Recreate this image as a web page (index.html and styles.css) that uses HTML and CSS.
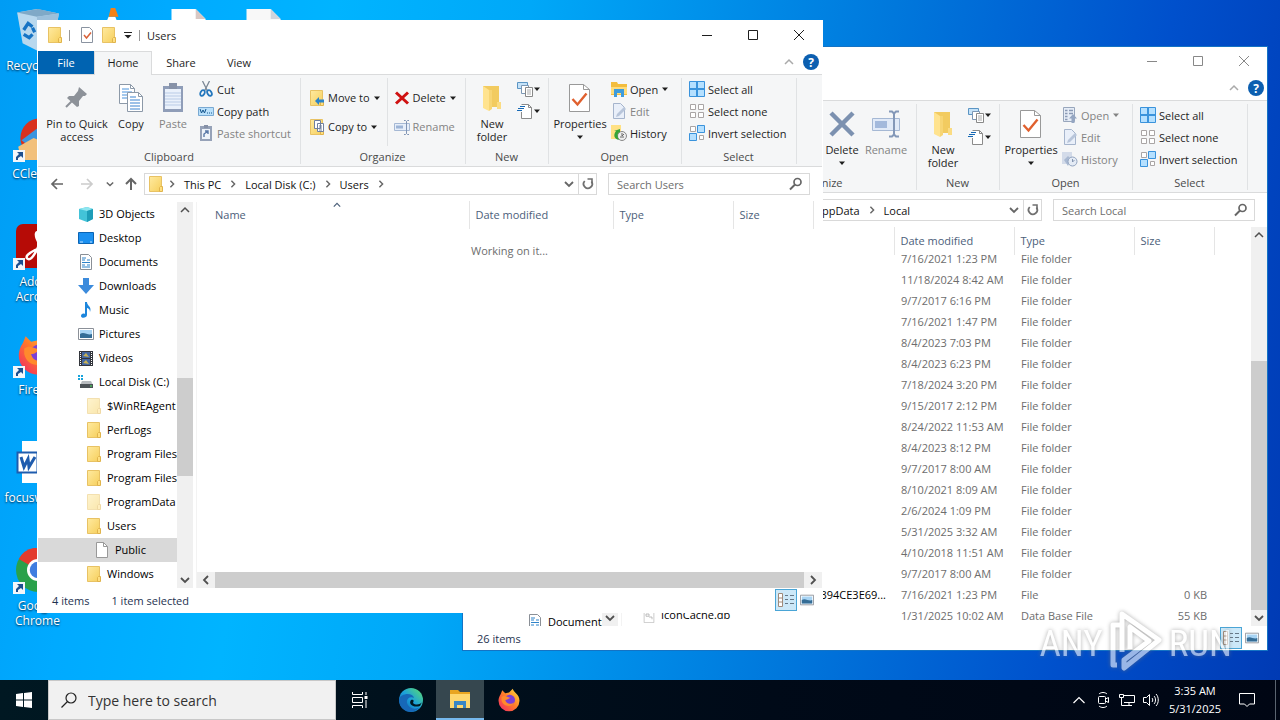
FILE: index.html
```html
<!DOCTYPE html>
<html lang="en">
<head>
  <meta charset="UTF-8">
  <title>Desktop</title>
  <link rel="stylesheet" href="styles.css">
</head>
<body>

<!-- shared icons -->
<svg class="defs" aria-hidden="true">
  <defs>
    <linearGradient id="gold" x1="0" y1="0" x2="1" y2="1"><stop offset="0" stop-color="#ffeaa0"/><stop offset="1" stop-color="#f6cf5c"/></linearGradient>
    <linearGradient id="flame" x1="1" y1="0" x2="0" y2="1"><stop offset="0" stop-color="#ffe23a"/><stop offset=".5" stop-color="#ff7a2a"/><stop offset="1" stop-color="#f0226a"/></linearGradient>
    <linearGradient id="edge" x1="0" y1="1" x2="1" y2="0"><stop offset="0" stop-color="#0c59a4"/><stop offset=".5" stop-color="#1ba0dc"/><stop offset="1" stop-color="#5fe06a"/></linearGradient>
    <symbol id="folder" viewBox="0 0 16 16"><path d="M1.500.5h12v15h-12z" fill="url(#gold)" stroke="#e8c264"/><path d="M12.500 10.500h2v5h-3v-4z" fill="#ffdf80" stroke="#e0b44c"/></symbol>
    <symbol id="bigfolder" viewBox="0 0 32 32"><path d="M7 4h16v21H7z" fill="#f2cb60"/><path d="M7 4l6 4v21l-6-3z" fill="#ffe38f"/><path d="M21 20h4v7h-4z" fill="#fbdc83"/><path d="M13 8h3v19l-3 2z" fill="#f7d574"/></symbol>
    <symbol id="check" viewBox="0 0 16 16"><path d="M2.500.5h8l3 3v12h-11z" fill="#fff" stroke="#8a93a0"/><path d="M5 8l2.500 3L12 5.500" fill="none" stroke="#d8623a" stroke-width="1.500"/></symbol>
    <symbol id="prop" viewBox="0 0 32 32"><path d="M5.500 2.500h14l6 5v22h-20z" fill="#fff" stroke="#999"/><path d="M19.500 2.500v5h6" fill="none" stroke="#999"/><path d="M8.500 17l5 5.500 9-11" fill="none" stroke="#e0602e" stroke-width="2.400"/></symbol>
    <symbol id="pin" viewBox="0 0 32 32"><path d="M18 5l8 7-2 2-2 0-4 5 0 5-2 1-10-9 2-2 5 0 4-5z" fill="#8d9299"/><path d="M12 18l-7 7" stroke="#8d9299" stroke-width="2"/></symbol>
    <symbol id="copy" viewBox="0 0 32 32"><path d="M4.500 2.500h11l4 4v15h-15z" fill="#fff" stroke="#8c99a8"/><path d="M15.500 2.500v4h4" fill="none" stroke="#8c99a8"/><path d="M7 7h7M7 10h10M7 13h10M7 16h10" stroke="#4b93dc"/><path d="M12.500 10.500h11l4 4v15h-15z" fill="#fff" stroke="#8c99a8"/><path d="M23.500 10.500v4h4" fill="none" stroke="#8c99a8"/><path d="M15 15h6M15 18h10M15 21h10M15 24h10M15 27h10" stroke="#3b83d0"/></symbol>
    <symbol id="paste" viewBox="0 0 32 32"><path d="M6 4h20v26H6z" fill="#8f9db8"/><path d="M8 7h16v20H8z" fill="#eaf1fb"/><path d="M12 1h8v6h-8z" fill="#8792a8"/><path d="M8 11h16M8 14h16M8 17h16M8 20h16M8 23h16" stroke="#b9cbe6"/></symbol>
    <symbol id="cut" viewBox="0 0 16 16"><path d="M4.500 0l5 10M11.500 0l-5 10" stroke="#7b8794" stroke-width="1.300"/><ellipse cx="4.500" cy="12" rx="2" ry="3" fill="none" stroke="#2477bd" stroke-width="1.800" transform="rotate(30 4.500 12)"/><ellipse cx="11.500" cy="12" rx="2" ry="3" fill="none" stroke="#2477bd" stroke-width="1.800" transform="rotate(-30 11.500 12)"/></symbol>
    <symbol id="path" viewBox="0 0 16 16"><path d="M.5 4.500h15v8H.5z" fill="#b9e0fb" stroke="#79a9d2"/><path d="M2 6l1.500 4L5 7l1.500 3L8 6M9 10h1M11 10h1M13 10h1" fill="none" stroke="#14548c"/></symbol>
    <symbol id="shortcut" viewBox="0 0 16 16"><path d="M2 1h12v15H2z" fill="#96a2b8"/><path d="M4 4h8v10H4z" fill="#eef3fa"/><path d="M6 0h4v3H6z" fill="#8590a6"/><path d="M6 12V9l4-3M7 6h3v3" fill="none" stroke="#5a79a8" stroke-width="1.400"/></symbol>
    <symbol id="moveto" viewBox="0 0 16 16"><use href="#folder"/><path d="M6 11l4-4v2.500h5v3h-5V15z" fill="#2c84c8"/></symbol>
    <symbol id="copyto" viewBox="0 0 16 16"><use href="#folder"/><path d="M5.500 1.500h6v8h-6zM8.500 4.500h6v8h-6z" fill="#fff" stroke="#7080a0"/><path d="M10 7h3M10 9h3M10 11h3" stroke="#7080a0"/></symbol>
    <symbol id="del" viewBox="0 0 16 16"><path d="M2 2.500l12 11M14 2.500L2 13.500" stroke="#cf1111" stroke-width="3"/></symbol>
    <symbol id="bigdel" viewBox="0 0 32 32"><path d="M5 5l22 22M27 5L5 27" stroke="#7c91b0" stroke-width="4.500"/></symbol>
    <symbol id="rename" viewBox="0 0 16 16"><path d="M.5 4.500h15v7H.5z" fill="#e6eefa" stroke="#a5b8d4"/><path d="M2 6.500h7v3H2z" fill="#9db4d6"/><path d="M10 1.500h1.500l1 1 1-1H15M12.500 2.500v12M10 15.500h1.500l1-1 1 1H15" fill="none" stroke="#8094b4"/></symbol>
    <symbol id="bigrename" viewBox="0 0 32 32"><path d="M2.500 10.500h27v12h-27z" fill="#e1eaf8" stroke="#a5b8d4"/><path d="M5 13h12v7H5z" fill="#a3b9dc"/><path d="M19 3.500h3l2 2 2-2h3M24 5v22M19 28.500h3l2-2 2 2h3" fill="none" stroke="#8498b8" stroke-width="2"/></symbol>
    <symbol id="newitem" viewBox="0 0 16 16"><path d="M.5 1.500h10v6H.5z" fill="#c5e2f8" stroke="#5b95c4"/><path d="M4.500 4.500h7v8h-7z" fill="#fff" stroke="#7b97b4"/><path d="M8.500 6.500h7v9h-7z" fill="#fff" stroke="#888"/><path d="M10 9h4M10 11h4M10 13h4" stroke="#aaa"/></symbol>
    <symbol id="easy" viewBox="0 0 16 16"><path d="M4.500 1.500h7l3 3v11h-10" fill="#fff" stroke="#8b8b8b"/><path d="M4.500 9v6.500M11.500 1.500v3h3" fill="none" stroke="#8b8b8b"/><path d="M3 3.500h5M1 5.500h6M0 7.500h5" stroke="#1769b5"/></symbol>
    <symbol id="open" viewBox="0 0 16 16"><path d="M0 1h6l1 2h9v11H0z" fill="#f3bd3d"/><path d="M0 6h16v7H0z" fill="#ffdc7c"/><path d="M3 16V8h10v8h-3v-4H6v4z" fill="#3d9bdc"/></symbol>
    <symbol id="openoff" viewBox="0 0 16 16"><path d="M1.500.5h11v14h-11z" fill="#e6edf7" stroke="#98a6bc"/><path d="M7 3.500h4M7 6.500h4M3 3.500h2.500M3 6.500h2.500M3 9.500h2.500M3 12.500h2.500" stroke="#8b9ab5" stroke-width="1.600"/><path d="M11 7l4 4.500h-2.500V16h-3v-4.500H7z" fill="#95a6c2"/></symbol>
    <symbol id="edit" viewBox="0 0 16 16"><path d="M2.500.5h7l4 4v11h-11z" fill="#e9eff9" stroke="#a5b4cc"/><path d="M5 14l1-3 7-7 2 2-7 7z" fill="#b8c5da"/></symbol>
    <symbol id="history" viewBox="0 0 16 16"><path d="M0 0h10v14H0z" fill="#ffe184"/><circle cx="11" cy="11" r="4.500" fill="#eee" stroke="#888"/><path d="M11 8v3l2-2M9 12h4" fill="none" stroke="#666"/><path d="M9 4v3c-3 1-3 4-1 8-5-1-6-5-3-9L3 6z" fill="#36a438"/></symbol>
    <symbol id="historyoff" viewBox="0 0 16 16"><path d="M0 1h10v12H0z" fill="#d3dbe9"/><path d="M2 9l4-4 3 3-3 7z" fill="#a9b9d2"/><circle cx="10.500" cy="10.500" r="4.500" fill="#e4ebf5" stroke="#91a3bf"/><path d="M10.500 8v3l2-2" fill="none" stroke="#8495b0"/></symbol>
    <symbol id="selall" viewBox="0 0 16 16"><path d="M.5.5h15v15H.5z" fill="#b5e0ff" stroke="#3a93dc"/><path d="M8 0v16M0 8h16" stroke="#3a93dc" stroke-width="2"/></symbol>
    <symbol id="selnone" viewBox="0 0 16 16"><path d="M1.500 1.500h5v5h-5zM9.500 1.500h5v5h-5zM1.500 9.500h5v5h-5zM9.500 9.500h5v5h-5z" fill="#fff" stroke="#a9a5a5"/></symbol>
    <symbol id="selinv" viewBox="0 0 16 16"><path d="M1.500 1.500h5v5h-5zM10.500 10.500h4v4h-4z" fill="#fff" stroke="#a9a5a5"/><path d="M8.500.5h7v7h-7zM.5 8.500h7v7h-7z" fill="#b5e0ff" stroke="#3a93dc"/></symbol>
    <symbol id="down" viewBox="0 0 8 8"><path d="M1 2.500h6L4 6z" fill="currentColor"/></symbol>
    <symbol id="chev" viewBox="0 0 10 10"><path d="M1 3l4 4 4-4" fill="none" stroke="currentColor" stroke-width="1.800"/></symbol>
    <symbol id="chevup" viewBox="0 0 10 10"><path d="M1 7l4-4 4 4" fill="none" stroke="currentColor" stroke-width="1.500"/></symbol>
    <symbol id="chevr" viewBox="0 0 10 10"><path d="M3 1l4 4-4 4" fill="none" stroke="currentColor" stroke-width="1.800"/></symbol>
    <symbol id="chevl" viewBox="0 0 10 10"><path d="M7 1L3 5l4 4" fill="none" stroke="currentColor" stroke-width="1.800"/></symbol>
    <symbol id="back" viewBox="0 0 16 16"><path d="M14 8H3M8 3L3 8l5 5" fill="none" stroke="currentColor" stroke-width="1.700"/></symbol>
    <symbol id="fwd" viewBox="0 0 16 16"><path d="M2 8h11M8 3l5 5-5 5" fill="none" stroke="currentColor" stroke-width="1.700"/></symbol>
    <symbol id="up" viewBox="0 0 16 16"><path d="M8 14V3M3 8l5-5 5 5" fill="none" stroke="currentColor" stroke-width="2"/></symbol>
    <symbol id="refresh" viewBox="0 0 16 16"><path d="M4.700 5A4.300 4.300 0 1 0 11.500 5.500" fill="none" stroke="#707070" stroke-width="1.800"/><path d="M7.500 3H12v4.500" fill="none" stroke="#707070" stroke-width="1.600"/></symbol>
    <symbol id="find" viewBox="0 0 16 16"><circle cx="9.500" cy="6" r="3.500" fill="none" stroke="currentColor" stroke-width="1.700"/><path d="M7 8.500L2 13.500" stroke="currentColor" stroke-width="2"/></symbol>
    <symbol id="min" viewBox="0 0 12 12"><path d="M1 6.500h10" stroke="currentColor"/></symbol>
    <symbol id="max" viewBox="0 0 12 12"><path d="M1.500 1.500h9v9h-9z" fill="none" stroke="currentColor"/></symbol>
    <symbol id="close" viewBox="0 0 12 12"><path d="M1 1l10 10M11 1L1 11" stroke="currentColor"/></symbol>
    <symbol id="documents" viewBox="0 0 16 16"><path d="M2.500.5h8l3 3v12h-11z" fill="#fff" stroke="#8a8f96"/><path d="M4 4h4M9 6h3M4 6h3M4 8.500h8M4 11h3M9 11h3M4 13h8" stroke="#2f83c9"/></symbol>
    <symbol id="blank" viewBox="0 0 16 16"><path d="M2.500.5h7l4 4v11h-11z" fill="#fff" stroke="#999"/><path d="M9.500.5v4h4" fill="none" stroke="#999"/></symbol>
    <symbol id="dbfile" viewBox="0 0 16 16"><path d="M1.500.5h11l2 2v13h-13z" fill="#fff" stroke="#bbb"/><path d="M4 4h4v3H4zM8 8h4v3" fill="none" stroke="#aaa"/></symbol>
    <symbol id="details" viewBox="0 0 16 16"><path d="M.5 1.500h4v13h-4z" fill="#fff" stroke="#a08a7a"/><path d="M.5 6h4M.5 10h4" stroke="#a08a7a"/><path d="M7 3.500h3M12 3.500h4M7 7.500h3M12 7.500h4M7 11.500h3M12 11.500h4" stroke="#667888"/></symbol>
    <symbol id="pictures" viewBox="0 0 16 16"><path d="M.5 2.500h15v11H.5z" fill="#fff" stroke="#8b9098"/><path d="M2 4h12v8H2z" fill="#a8d4f4"/><path d="M2 8c4-3 8 2 12 0v4H2z" fill="#356d96"/></symbol>
    <symbol id="linkbadge" viewBox="0 0 12 12"><path d="M0 0h12v12H0z" fill="#f2f6fa"/><path d="M3 10V7l3-3-2-2h6v6L8 6 5 8v2z" fill="#1d4f8f"/></symbol>
    <symbol id="firefox" viewBox="0 0 32 32"><path d="M5 8l2-5 4 4 5-1 5-5c1 5 9 7 9 16a14 14 0 0 1-28 0c0-3 1-6 3-9z" fill="url(#flame)"/><circle cx="17" cy="16" r="7" fill="#7b3fd6"/><path d="M6 12c4-3 7 0 12 1-3 1-4 3-7 3 1 5 7 7 12 3-2 7-15 7-17-3z" fill="#ff8a2c"/></symbol>
  </defs>
</svg>

<main class="desktop">
  <ul class="shortcuts">
    <li>
      <svg class="pic" viewBox="0 0 40 40"><path d="M1 4l18-3 20 4-5 29-14 5-14-7z" fill="#b8d8ee"/><path d="M1 4l18 4 20-3-19-4z" fill="#7fa9c7"/><path d="M19 8l20-3-5 29-14 5z" fill="#9cc0db"/><path d="M7 20l4-6 4 3M7 24l5 3 3-3M15 18l2 4" fill="none" stroke="#1673c4" stroke-width="3"/></svg>
      <span>Recycle Bin</span>
    </li>
    <li>
      <svg class="pic" viewBox="0 0 40 40"><path d="M5 27L2 38h36l-3-11z" fill="#f07c10"/><path d="M5 34h28L22 8h-6z" fill="#fff"/><path d="M16 8l2-8h4l3 8z" fill="#f58216"/></svg>
    </li>
    <li>
      <svg class="pic" viewBox="0 0 40 40"><path d="M5 1h22l9 9v29H5z" fill="#fff"/><path d="M27 1l9 9h-9z" fill="#d8c8c4"/></svg>
    </li>
    <li>
      <svg class="pic" viewBox="0 0 40 40"><path d="M5 1h22l9 9v29H5z" fill="#f8f8f8"/><path d="M27 1l9 9h-9z" fill="#d0d4dc"/></svg>
    </li>
    <li>
      <svg class="pic" viewBox="0 0 40 40"><circle cx="22" cy="20" r="18" fill="#d8311f"/><path d="M5 22l16-12 16 14-14 12z" fill="#3a95e0"/><path d="M2 28l14-8 20 8-3 12H5z" fill="#f2c07c"/></svg>
      <svg class="link"><use href="#linkbadge"/></svg>
      <span>CCleaner</span>
    </li>
    <li>
      <svg class="pic" viewBox="0 0 44 44"><rect width="44" height="44" rx="7" fill="#b60b06"/><path d="M22 8c-5 0 0 12 5 17s10 5 10 1-12-3-18 0-11 7-7 9 12-13 12-20-1-7-2-7z" fill="none" stroke="#fff" stroke-width="2.500"/></svg>
      <svg class="link"><use href="#linkbadge"/></svg>
      <span>Adobe Acrobat</span>
    </li>
    <li>
      <svg class="pic"><use href="#firefox"/></svg>
      <svg class="link"><use href="#linkbadge"/></svg>
      <span>Firefox</span>
    </li>
    <li>
      <svg class="pic" viewBox="0 0 44 44"><path d="M6 1h32v42H6z" fill="#fff"/><rect x="1.500" y="12.500" width="20" height="20" fill="#fff" stroke="#1f5cae" stroke-width="2"/><path d="M5 17l3 10 4-8 1 8 6-10" fill="none" stroke="#1f5cae" stroke-width="3"/></svg>
      <span>focuswin.rtf</span>
    </li>
    <li>
      <svg class="pic" viewBox="0 0 48 48"><circle cx="24" cy="24" r="24" fill="#2aa14b"/><path d="M24 24L3 12a24 24 0 0 1 42 0z" fill="#e33b2e"/><path d="M24 24L45 12a24 24 0 0 1-21 36z" fill="#fbc116"/><circle cx="24" cy="24" r="12" fill="#fff"/><circle cx="24" cy="24" r="9" fill="#3f7de0"/></svg>
      <svg class="link"><use href="#linkbadge"/></svg>
      <span>Google Chrome</span>
    </li>
  </ul>

  <!-- background window -->
  <section class="window local">
    <header class="titlebar">
      <div class="controls">
        <button aria-label="Minimize"><svg><use href="#min"/></svg></button>
        <button aria-label="Maximize"><svg><use href="#max"/></svg></button>
        <button aria-label="Close"><svg><use href="#close"/></svg></button>
      </div>
    </header>
    <nav class="tabs">
      <button class="collapse" aria-label="Collapse ribbon"><svg><use href="#chevup"/></svg></button>
      <button class="help" aria-label="Help">?</button>
    </nav>
    <div class="ribbon">
      <div class="group clipboard"></div>
      <div class="group organize">
        <div class="tools">
          <button class="big"><svg><use href="#bigdel"/></svg>Delete<svg class="arrow"><use href="#down"/></svg></button>
          <button class="big off"><svg><use href="#bigrename"/></svg>Rename</button>
        </div>
        <h2>Organize</h2>
      </div>
      <div class="group new">
        <div class="tools">
          <button class="big"><svg><use href="#bigfolder"/></svg>New folder</button>
          <div class="stack">
            <button aria-label="New item"><svg><use href="#newitem"/></svg><svg class="arrow"><use href="#down"/></svg></button>
            <button aria-label="Easy access"><svg><use href="#easy"/></svg><svg class="arrow"><use href="#down"/></svg></button>
          </div>
        </div>
        <h2>New</h2>
      </div>
      <div class="group open">
        <div class="tools">
          <button class="big"><svg><use href="#prop"/></svg>Properties<svg class="arrow"><use href="#down"/></svg></button>
          <div class="stack">
            <button class="off"><svg><use href="#openoff"/></svg>Open<svg class="arrow"><use href="#down"/></svg></button>
            <button class="off"><svg><use href="#edit"/></svg>Edit</button>
            <button class="off"><svg><use href="#historyoff"/></svg>History</button>
          </div>
        </div>
        <h2>Open</h2>
      </div>
      <div class="group select">
        <div class="tools">
          <div class="stack">
            <button><svg><use href="#selall"/></svg>Select all</button>
            <button><svg><use href="#selnone"/></svg>Select none</button>
            <button><svg><use href="#selinv"/></svg>Invert selection</button>
          </div>
        </div>
        <h2>Select</h2>
      </div>
    </div>
    <div class="navbar">
      <div class="address">
        <a href="#">AppData</a><svg class="sep"><use href="#chevr"/></svg>
        <a href="#">Local</a>
        <button class="drop" aria-label="Previous locations"><svg><use href="#chev"/></svg></button>
        <button class="refresh" aria-label="Refresh"><svg><use href="#refresh"/></svg></button>
      </div>
      <label class="search"><input type="text" placeholder="Search Local" aria-label="Search Local"><svg><use href="#find"/></svg></label>
    </div>
    <div class="content">
      <aside class="tree">
        <ul>
          <li><svg><use href="#documents"/></svg>Documents</li>
        </ul>
        <div class="scroll">
          <button aria-label="Scroll up"><svg><use href="#chevup"/></svg></button>
          <div class="track"></div>
          <button aria-label="Scroll down"><svg><use href="#chev"/></svg></button>
        </div>
      </aside>
      <div class="list">
        <table class="head">
          <tr><th class="name"></th><th class="date">Date modified</th><th class="type">Type</th><th class="size">Size</th><th></th></tr>
        </table>
        <div class="rows">
          <table>
            <tr><td class="name"></td><td class="date">7/16/2021 1:23 PM</td><td class="type">File folder</td><td class="size"></td><td></td></tr>
            <tr><td></td><td>11/18/2024 8:42 AM</td><td>File folder</td><td></td><td></td></tr>
            <tr><td></td><td>9/7/2017 6:16 PM</td><td>File folder</td><td></td><td></td></tr>
            <tr><td></td><td>7/16/2021 1:47 PM</td><td>File folder</td><td></td><td></td></tr>
            <tr><td></td><td>8/4/2023 7:03 PM</td><td>File folder</td><td></td><td></td></tr>
            <tr><td></td><td>8/4/2023 6:23 PM</td><td>File folder</td><td></td><td></td></tr>
            <tr><td></td><td>7/18/2024 3:20 PM</td><td>File folder</td><td></td><td></td></tr>
            <tr><td></td><td>9/15/2017 2:12 PM</td><td>File folder</td><td></td><td></td></tr>
            <tr><td></td><td>8/24/2022 11:53 AM</td><td>File folder</td><td></td><td></td></tr>
            <tr><td></td><td>8/4/2023 8:12 PM</td><td>File folder</td><td></td><td></td></tr>
            <tr><td></td><td>9/7/2017 8:00 AM</td><td>File folder</td><td></td><td></td></tr>
            <tr><td></td><td>8/10/2021 8:09 AM</td><td>File folder</td><td></td><td></td></tr>
            <tr><td></td><td>2/6/2024 1:09 PM</td><td>File folder</td><td></td><td></td></tr>
            <tr><td></td><td>5/31/2025 3:32 AM</td><td>File folder</td><td></td><td></td></tr>
            <tr><td></td><td>4/10/2018 11:51 AM</td><td>File folder</td><td></td><td></td></tr>
            <tr><td></td><td>9/7/2017 8:00 AM</td><td>File folder</td><td></td><td></td></tr>
            <tr><td class="fname long">B394CE3E69...</td><td>7/16/2021 1:23 PM</td><td>File</td><td class="num">0 KB</td><td></td></tr>
            <tr><td class="fname"><svg><use href="#dbfile"/></svg>IconCache.db</td><td>1/31/2025 10:02 AM</td><td>Data Base File</td><td class="num">55 KB</td><td></td></tr>
          </table>
        </div>
      </div>
      <div class="scroll main">
        <button aria-label="Scroll up"><svg><use href="#chevup"/></svg></button>
        <div class="track"><div class="thumb"></div></div>
        <button aria-label="Scroll down"><svg><use href="#chev"/></svg></button>
      </div>
    </div>
    <footer class="status">
      <span>26 items</span>
      <button class="view on" aria-label="Details"><svg><use href="#details"/></svg></button>
      <button class="view" aria-label="Thumbnails"><svg><use href="#pictures"/></svg></button>
    </footer>
  </section>

  <!-- foreground window -->
  <section class="window users">
    <header class="titlebar">
      <svg class="ico"><use href="#folder"/></svg>
      <i class="bar"></i>
      <button class="quick" aria-label="Properties"><svg><use href="#check"/></svg></button>
      <button class="quick" aria-label="New folder"><svg><use href="#folder"/></svg></button>
      <button class="custom" aria-label="Customize"><svg viewBox="0 0 10 10"><path d="M1 2.500h8" stroke="#222"/><path d="M1.500 5h7L5 8.500z" fill="#222"/></svg></button>
      <i class="bar"></i>
      <h1>Users</h1>
      <div class="controls">
        <button aria-label="Minimize"><svg><use href="#min"/></svg></button>
        <button aria-label="Maximize"><svg><use href="#max"/></svg></button>
        <button aria-label="Close"><svg><use href="#close"/></svg></button>
      </div>
    </header>
    <nav class="tabs">
      <button class="file">File</button>
      <button class="active">Home</button>
      <button>Share</button>
      <button>View</button>
      <button class="collapse" aria-label="Collapse ribbon"><svg><use href="#chevup"/></svg></button>
      <button class="help" aria-label="Help">?</button>
    </nav>
    <div class="ribbon">
      <div class="group clipboard">
        <div class="tools">
          <button class="big wide"><svg><use href="#pin"/></svg>Pin to Quick access</button>
          <button class="big"><svg><use href="#copy"/></svg>Copy</button>
          <button class="big off"><svg><use href="#paste"/></svg>Paste</button>
          <div class="stack">
            <button><svg><use href="#cut"/></svg>Cut</button>
            <button><svg><use href="#path"/></svg>Copy path</button>
            <button class="off"><svg><use href="#shortcut"/></svg>Paste shortcut</button>
          </div>
        </div>
        <h2>Clipboard</h2>
      </div>
      <div class="group organize">
        <div class="tools">
          <div class="stack two">
            <button><svg><use href="#moveto"/></svg>Move to<svg class="arrow"><use href="#down"/></svg></button>
            <button><svg><use href="#copyto"/></svg>Copy to<svg class="arrow"><use href="#down"/></svg></button>
          </div>
          <div class="stack two">
            <button><svg><use href="#del"/></svg>Delete<svg class="arrow"><use href="#down"/></svg></button>
            <button class="off"><svg><use href="#rename"/></svg>Rename</button>
          </div>
        </div>
        <h2>Organize</h2>
      </div>
      <div class="group new">
        <div class="tools">
          <button class="big"><svg><use href="#bigfolder"/></svg>New folder</button>
          <div class="stack">
            <button aria-label="New item"><svg><use href="#newitem"/></svg><svg class="arrow"><use href="#down"/></svg></button>
            <button aria-label="Easy access"><svg><use href="#easy"/></svg><svg class="arrow"><use href="#down"/></svg></button>
          </div>
        </div>
        <h2>New</h2>
      </div>
      <div class="group open">
        <div class="tools">
          <button class="big"><svg><use href="#prop"/></svg>Properties<svg class="arrow"><use href="#down"/></svg></button>
          <div class="stack">
            <button><svg><use href="#open"/></svg>Open<svg class="arrow"><use href="#down"/></svg></button>
            <button class="off"><svg><use href="#edit"/></svg>Edit</button>
            <button><svg><use href="#history"/></svg>History</button>
          </div>
        </div>
        <h2>Open</h2>
      </div>
      <div class="group select">
        <div class="tools">
          <div class="stack">
            <button><svg><use href="#selall"/></svg>Select all</button>
            <button><svg><use href="#selnone"/></svg>Select none</button>
            <button><svg><use href="#selinv"/></svg>Invert selection</button>
          </div>
        </div>
        <h2>Select</h2>
      </div>
    </div>
    <div class="navbar">
      <button aria-label="Back"><svg><use href="#back"/></svg></button>
      <button class="faded" aria-label="Forward"><svg><use href="#fwd"/></svg></button>
      <button class="recent" aria-label="Recent"><svg><use href="#chev"/></svg></button>
      <button class="up" aria-label="Up"><svg><use href="#up"/></svg></button>
      <div class="address">
        <svg class="ico"><use href="#folder"/></svg><svg class="sep"><use href="#chevr"/></svg>
        <a href="#">This PC</a><svg class="sep"><use href="#chevr"/></svg>
        <a href="#">Local Disk (C:)</a><svg class="sep"><use href="#chevr"/></svg>
        <a href="#">Users</a><svg class="sep"><use href="#chevr"/></svg>
        <button class="drop" aria-label="Previous locations"><svg><use href="#chev"/></svg></button>
        <button class="refresh" aria-label="Refresh"><svg><use href="#refresh"/></svg></button>
      </div>
      <label class="search"><input type="text" placeholder="Search Users" aria-label="Search Users"><svg><use href="#find"/></svg></label>
    </div>
    <div class="content">
      <aside class="tree">
        <ul>
          <li><svg viewBox="0 0 16 16"><path d="M1 3l8-2 6 2v10l-6 3-8-3z" fill="#43c3d8"/><path d="M1 3l8 2 6-2-6-2z" fill="#8fe6f0"/><path d="M9 5l6-2v10l-6 3z" fill="#1e9db8"/></svg>3D Objects</li>
          <li><svg viewBox="0 0 16 16"><path d="M.5 2.500h15v11H.5z" fill="#1b90f0" stroke="#0b64b4"/><path d="M2 12h3M12 12h2" stroke="#bfe0ff"/></svg>Desktop</li>
          <li><svg><use href="#documents"/></svg>Documents</li>
          <li><svg viewBox="0 0 16 16"><path d="M5 0h6v7h5l-8 9-8-9h5z" fill="#3c8bdc"/></svg>Downloads</li>
          <li><svg viewBox="0 0 16 16"><path d="M7 0h2c0 4 5 4 3 10 0-3-2-4-3-4v7c0 3-6 4-6 1 0-2 2-3 4-2z" fill="#1d86dc"/></svg>Music</li>
          <li><svg><use href="#pictures"/></svg>Pictures</li>
          <li><svg viewBox="0 0 16 16"><path d="M1 1h14v15H1z" fill="#33363c"/><path d="M2.500 2v14M13.500 2v14" stroke="#fff" stroke-dasharray="1 1"/><path d="M4 2h8v6H4zM4 9h8v6H4z" fill="#4467a0"/><path d="M5 6l3-3 3 4zM5 13l3-3 3 4z" fill="#c9b255"/></svg>Videos</li>
          <li><svg viewBox="0 0 16 16"><path d="M0 1h2v2H0zM3 1h2v2H3zM0 4h2v2H0zM3 4h2v2H3z" fill="#18a4dc"/><path d="M4 7h9l2 4H2z" fill="#b9bcc0"/><path d="M2 10h13v4H2z" fill="#4d5257"/><path d="M12 12h2" stroke="#4df060"/></svg>Local Disk (C:)</li>
          <li class="sub dim"><svg><use href="#folder"/></svg>$WinREAgent</li>
          <li class="sub"><svg><use href="#folder"/></svg>PerfLogs</li>
          <li class="sub"><svg><use href="#folder"/></svg>Program Files</li>
          <li class="sub"><svg><use href="#folder"/></svg>Program Files (x86)</li>
          <li class="sub dim"><svg><use href="#folder"/></svg>ProgramData</li>
          <li class="sub"><svg><use href="#folder"/></svg>Users</li>
          <li class="leaf selected"><svg><use href="#blank"/></svg>Public</li>
          <li class="sub"><svg><use href="#folder"/></svg>Windows</li>
        </ul>
        <div class="scroll">
          <button aria-label="Scroll up"><svg><use href="#chevup"/></svg></button>
          <div class="track"><div class="thumb"></div></div>
          <button aria-label="Scroll down"><svg><use href="#chev"/></svg></button>
        </div>
      </aside>
      <div class="list">
        <table class="head">
          <tr><th class="name"><svg class="sort"><use href="#chevup"/></svg>Name</th><th class="date">Date modified</th><th class="type">Type</th><th class="size">Size</th><th></th></tr>
        </table>
        <p class="working">Working on it...</p>
        <div class="hscroll">
          <button aria-label="Scroll left"><svg><use href="#chevl"/></svg></button>
          <div class="thumb"></div>
          <button aria-label="Scroll right"><svg><use href="#chevr"/></svg></button>
        </div>
      </div>
    </div>
    <footer class="status">
      <span>4 items</span>
      <span>1 item selected</span>
      <button class="view on" aria-label="Details"><svg><use href="#details"/></svg></button>
      <button class="view" aria-label="Thumbnails"><svg><use href="#pictures"/></svg></button>
    </footer>
  </section>

  <div class="watermark">
    <span>ANY</span>
    <svg viewBox="0 0 56 64"><path d="M12 16H5v40h4M14 43V5l37 26L16 59v-8l25-19-19-14v22" fill="none" stroke="#fff" stroke-width="5" stroke-linejoin="round"/></svg>
    <span>RUN</span>
  </div>
</main>

<footer class="taskbar">
  <button class="start" aria-label="Start"><svg viewBox="0 0 16 16"><path d="M0 2l7-1v6.500H0zM8 1l8-1v7.500H8zM0 8.500h7V15l-7-1zM8 8.500h8V16l-8-1z" fill="#fff"/></svg></button>
  <label class="tasksearch">
    <svg viewBox="0 0 16 16"><circle cx="10" cy="6" r="5" fill="none" stroke="#222" stroke-width="1.200"/><path d="M6.500 9.500L.5 15.500" stroke="#222" stroke-width="1.200"/></svg>
    <input type="text" placeholder="Type here to search" aria-label="Type here to search">
  </label>
  <button class="app taskview" aria-label="Task view"><svg viewBox="0 0 16 16"><path d="M.5 0v2.500h10V0M.5 5.500h10v5H.5zM.5 16v-2.500h10V16M14 0v3M14 8v8" fill="none" stroke="#fff"/><path d="M12.500 4h3v3h-3z" fill="#fff"/></svg></button>
  <button class="app" aria-label="Edge"><svg viewBox="0 0 24 24"><circle cx="12" cy="12" r="12" fill="url(#edge)"/><path d="M0 12C1 5 14 4 15 10c-4-2-8 1-7 5s7 8 13 4C15 27 1 25 0 12z" fill="#1768b8"/><path d="M12 12c3-1 3 1 2 3 3 3 8 1 9-1l-2 4c-7 2-12-2-9-6z" fill="#001822"/></svg></button>
  <button class="app running" aria-label="File Explorer"><svg viewBox="0 0 24 24"><path d="M2 3h8l2 2h10v16H2z" fill="#e9a521"/><path d="M2 7h20v14H2z" fill="#ffd76e"/><path d="M6 21v-7h12v7h-3v-3H9v3z" fill="#3a86c4"/></svg></button>
  <button class="app" aria-label="Firefox"><svg><use href="#firefox"/></svg></button>
  <div class="tray">
    <button aria-label="Show hidden icons"><svg viewBox="0 0 16 16"><path d="M2.500 11L8 5.500l5.500 5.500" fill="none" stroke="#fff" stroke-width="1.200"/></svg></button>
    <button aria-label="Meet Now"><svg viewBox="0 0 16 16"><rect x="3.500" y="4.500" width="7" height="7" rx="1" fill="none" stroke="#fff"/><path d="M10.500 7l3-1.500v5L10.500 9M4 2c2-2 6-2 8 0M4 14c2 2 6 2 8 0" fill="none" stroke="#fff"/></svg></button>
    <button aria-label="Network"><svg viewBox="0 0 16 16"><path d="M5 3.500h10.500v7H5M.5 2.500h4v3h-4zM2.500 5.500v8H7M10 10.500v3M7 13.500h6" fill="none" stroke="#fff"/></svg></button>
    <button aria-label="Volume"><svg viewBox="0 0 16 16"><path d="M.5 5.500h3l3-3v11l-3-3h-3zM9 6c1 1 1 3 0 4M11 4c2 2 2 6 0 8M13 2c3 3 3 9 0 12" fill="none" stroke="#fff"/></svg></button>
    <button class="clock"><span>3:35 AM</span><span>5/31/2025</span></button>
    <button class="action" aria-label="Notifications"><svg viewBox="0 0 16 16"><path d="M.5 1.500h15v10.500h-5L8 14.500 5.500 12h-5z" fill="none" stroke="#fff"/></svg></button>
    <button class="peek" aria-label="Show desktop"></button>
  </div>
</footer>

</body>
</html>
```
FILE: styles.css
```css
* {
  box-sizing: border-box;
}
body {
  margin: 0;
  height: 100vh;
  display: flex;
  flex-direction: column;
  overflow: hidden;
  font-family: "Open Sans", "Noto Sans", sans-serif;
  font-size: 11px;
  line-height: 13px;
  color: #1e1e1e;
}
.defs {
  position: absolute;
  width: 0;
  height: 0;
}
button {
  font: inherit;
  color: inherit;
  background: none;
  border: none;
  padding: 0;
  display: flex;
  align-items: center;
  justify-content: center;
}
input {
  font: inherit;
  border: none;
  background: none;
  padding: 0;
  outline: none;
}
h1, h2, p, ul {
  margin: 0;
  padding: 0;
  font-size: 11px;
  font-weight: normal;
}
ul {
  list-style: none;
}
a {
  color: #111;
  text-decoration: none;
}
svg {
  flex: none;
  width: 16px;
  height: 16px;
}

/* desktop */
.desktop {
  position: relative;
  flex: 1;
  overflow: hidden;
  background: linear-gradient(100deg, #009cf4 0%, #00aaff 12%, #00b4ff 24%, #00a8f8 38%, #0078dc 64%, #0050cc 84%, #003ab4 100%);
}
.shortcuts {
  display: grid;
  grid-template-columns: repeat(4, 75px);
  grid-auto-rows: 108px;
  padding-top: 8px;
}
.shortcuts li {
  display: grid;
  grid-template-rows: 50px auto;
  justify-items: center;
  align-content: start;
  color: #fff;
  font-size: 12px;
  line-height: 15px;
  text-align: center;
  text-shadow: 0 1px 2px #024;
}
.shortcuts li:nth-child(n+5) {
  grid-column: 1;
}
.shortcuts .pic {
  width: 44px;
  height: 44px;
  grid-area: 1 / 1;
}
.shortcuts .link {
  width: 12px;
  height: 12px;
  grid-area: 1 / 1;
  justify-self: start;
  align-self: end;
  margin: 0 0 4px 13px;
}

/* windows */
.window {
  position: absolute;
  display: flex;
  flex-direction: column;
  background: #fff;
  border: 1px solid #fff;
}
.users {
  left: 37px;
  top: 20px;
  width: 786px;
  height: 593px;
}
.local {
  left: 462px;
  top: 46px;
  width: 806px;
  height: 605px;
  border-color: #1473c4;
}
.titlebar {
  display: flex;
  align-items: center;
  height: 30px;
  padding: 0 0 2px 9px;
}
.titlebar .bar {
  width: 1px;
  height: 11px;
  background: #999;
  margin: 0 9px 0 6px;
}
.quick {
  margin-right: 6px;
}
.custom svg {
  width: 10px;
  height: 10px;
}
.titlebar h1 {
  margin-left: -2px;
}
.controls {
  display: flex;
  margin-left: auto;
}
.controls button {
  width: 46px;
  height: 28px;
}
.controls svg {
  width: 12px;
  height: 12px;
}
.local .controls {
  color: #888;
}
.tabs {
  display: flex;
  height: 24px;
  border-bottom: 1px solid #dadbdc;
}
.tabs button {
  width: 58px;
  padding-bottom: 1px;
}
.tabs .file {
  width: 56px;
  background: #0063b1;
  color: #fff;
}
.tabs .active {
  height: 24px;
  padding-bottom: 2px;
  background: #f5f6f7;
  border: 1px solid #dadbdc;
  border-bottom: none;
}
.tabs .collapse {
  width: 20px;
  margin-left: auto;
  color: #aaa;
}
.collapse svg {
  width: 10px;
  height: 10px;
}
.tabs .help {
  width: 16px;
  height: 16px;
  margin: 3px 3px 0 4px;
  padding: 0;
  border-radius: 50%;
  background: #0c5fb0;
  color: #fff;
  font-weight: bold;
  font-size: 12px;
}
.ribbon {
  display: flex;
  height: 92px;
  padding-top: 3px;
  background: #f5f6f7;
  border-bottom: 1px solid #dadbdc;
}
.group {
  display: flex;
  flex-direction: column;
  border-right: 1px solid #e0e2e4;
  margin-bottom: 2px;
  padding: 0 6px 0 5px;
}
.group h2 {
  margin-top: auto;
  padding-bottom: 1px;
  text-align: center;
  color: #4a4a4a;
}
.clipboard { width: 263px; }
.organize { width: 165px; }
.local .clipboard { width: 261px; }
.local .organize { width: 193px; }
.new { width: 83px; }
.open { width: 133px; }
.select { width: 115px; }
.clipboard {
  padding-left: 6px;
}
.tools {
  display: flex;
}
.local .organize .tools {
  justify-content: flex-end;
  padding-right: 2px;
}
.big {
  width: 42px;
  flex-direction: column;
  justify-content: flex-start;
  padding-top: 4px;
}
.local .organize .big {
  width: 44px;
}
.big svg {
  width: 32px;
  height: 32px;
  margin-bottom: 3px;
}
.big.wide {
  width: 66px;
}
.open .big {
  width: 52px;
}
.off {
  color: #838383;
}
svg.arrow {
  width: 8px;
  height: 8px;
}
.big svg.arrow {
  margin: 3px 0 0;
}
.stack {
  display: flex;
  flex-direction: column;
  align-items: flex-start;
  padding-left: 4px;
}
.stack button {
  height: 22px;
  gap: 3px;
  white-space: nowrap;
}
.open .stack {
  padding-left: 5px;
}
.select .stack {
  padding-left: 2px;
}
.stack.two {
  padding: 5px 6px 5px 3px;
}
.stack.two button {
  height: 29px;
}
.stack.two + .two {
  border-left: 1px solid #e0e2e4;
  padding-left: 6px;
}
.new .stack button {
  gap: 0;
}

/* navigation row */
.navbar {
  display: flex;
  align-items: center;
  height: 34px;
  padding: 0 12px 0 11px;
  color: #666;
}
.local .navbar {
  padding-left: 107px;
}
.navbar > button {
  margin-right: 14px;
}
.navbar .faded {
  margin-right: 11px;
  color: #ccc;
}
.navbar .recent {
  margin-right: 9px;
}
.recent svg {
  width: 8px;
  height: 8px;
}
.navbar .up {
  margin-right: 5px;
}
.address, .search {
  display: flex;
  align-items: center;
  height: 22px;
  border: 1px solid #d9d9d9;
}
.address {
  flex: 1;
  padding-left: 3px;
}
.local .address {
  padding-left: 244px;
}
.address .sep {
  width: 8px;
  height: 8px;
  margin: 0 8px;
}
.address .ico + .sep {
  margin-left: 4px;
}
.drop {
  width: 18px;
  height: 20px;
  margin-left: auto;
}
.drop svg {
  width: 10px;
  height: 10px;
}
.refresh {
  width: 18px;
  height: 20px;
  border-left: 1px solid #d9d9d9;
}
.search {
  width: 202px;
  margin-left: 11px;
  padding: 0 5px 0 8px;
}
.search input {
  flex: 1;
  min-width: 0;
}
.search input::placeholder {
  color: #6d6d6d;
}

/* body of a window */
.content {
  flex: 1;
  display: flex;
  min-height: 0;
}
.tree {
  display: flex;
  width: 159px;
  border-right: 1px solid #f3f3f3;
  margin-top: 1px;
}
.tree ul {
  flex: 1;
  overflow: hidden;
}
.tree li {
  display: flex;
  align-items: center;
  gap: 5px;
  height: 24px;
  padding: 0 0 1px 40px;
  white-space: nowrap;
  color: #000;
}
.tree .sub {
  padding-left: 48px;
}
.tree .leaf {
  padding-left: 56px;
}
.tree .dim svg {
  opacity: 0.5;
}
.tree .selected {
  background: #d9d9d9;
}
.local .tree ul {
  display: flex;
  flex-direction: column;
  justify-content: flex-end;
}
.local .tree li {
  padding-left: 64px;
  margin-bottom: -8px;
}
.scroll {
  display: flex;
  flex-direction: column;
  width: 16px;
  background: #f0f0f0;
  color: #505050;
}
.tree .scroll {
  margin-right: 3px;
}
.scroll button, .hscroll button {
  width: 16px;
  height: 16px;
}
.hscroll button {
  width: 18px;
}
.scroll svg, .hscroll svg {
  width: 10px;
  height: 10px;
}
.track {
  flex: 1;
  display: flex;
  flex-direction: column;
}
.thumb {
  background: #cdcdcd;
}
.track .thumb {
  height: 98px;
  margin-top: 160px;
}
.main .track .thumb {
  height: auto;
  flex: 1;
  margin-top: 118px;
}
.list {
  flex: 1;
  display: flex;
  flex-direction: column;
  min-width: 0;
}
table {
  width: 100%;
  table-layout: fixed;
  border-collapse: collapse;
}
.name { width: 272px; }
.date { width: 144px; }
.type { width: 120px; }
.size { width: 80px; }
.local .date { width: 120px; }
th {
  height: 28px;
  padding: 0 6px 2px;
  font-weight: normal;
  text-align: left;
  color: #4c607a;
  border-right: 1px solid #e5e5e5;
}
th:last-child {
  border: none;
}
th.name {
  position: relative;
  padding-left: 18px;
}
.sort {
  position: absolute;
  left: 50%;
  top: 0;
  width: 8px;
  height: 8px;
}
.rows {
  flex: 1;
  display: flex;
  align-items: flex-end;
  overflow: hidden;
}
td {
  height: 21px;
  padding: 0 7px;
  color: #6d6d6d;
  white-space: nowrap;
}
.num {
  text-align: right;
}
.fname {
  padding-left: 21px;
  color: #000;
}
.fname svg {
  width: 12px;
  height: 12px;
  margin-right: 6px;
  vertical-align: middle;
}
.long {
  text-align: right;
  padding-right: 8px;
}
.working {
  flex: 1;
  padding-top: 15px;
  text-align: center;
  color: #6d6d6d;
}
.hscroll {
  display: flex;
  background: #f0f0f0;
  color: #505050;
}
.hscroll .thumb {
  flex: 1;
}
.status {
  display: flex;
  align-items: center;
  height: 24px;
  padding: 0 5px 0 14px;
  color: #1e3250;
}
.status span {
  margin-right: 22px;
}
.view {
  width: 20px;
  height: 22px;
}
.view.on {
  width: 22px;
  margin-left: auto;
  background: #cce8f8;
  border: 1px solid #4aa5d6;
}
.view + .view svg {
  width: 14px;
  height: 14px;
}

.watermark {
  position: absolute;
  right: 48px;
  bottom: 7px;
  display: flex;
  align-items: center;
  gap: 5px;
  color: #fff;
  font-family: "Liberation Sans Narrow", "Roboto Condensed", Roboto, sans-serif;
  font-size: 37px;
  line-height: 40px;
  opacity: 0.6;
  filter: drop-shadow(0 0 2px #777);
}
.watermark span {
  padding-top: 6px;
}
.watermark svg {
  width: 56px;
  height: 64px;
}

/* taskbar */
.taskbar {
  display: flex;
  height: 40px;
  background: linear-gradient(90deg, #001822, #000a18 60%, #000614);
  color: #fff;
}
.start {
  width: 48px;
}
.tasksearch {
  display: flex;
  align-items: center;
  width: 288px;
  padding-left: 12px;
  gap: 11px;
  background: #f1f1f1;
  border: 1px solid #c8c8c8;
}
.tasksearch input {
  flex: 1;
  font-size: 14px;
}
.tasksearch input::placeholder {
  color: #333;
}
.app {
  width: 48px;
  margin-right: 1px;
}
.app svg {
  width: 24px;
  height: 24px;
}
.app.taskview {
  margin-right: 3px;
}
.taskview svg {
  width: 16px;
  height: 16px;
}
.running {
  background: #36474f;
  border-bottom: 2px solid #76b9ed;
}
.tray {
  display: flex;
  margin-left: auto;
}
.tray button {
  width: 24px;
}
.tray .clock {
  width: 64px;
  flex-direction: column;
  line-height: 18px;
}
.tray .action {
  width: 40px;
  margin-right: 8px;
}
.tray .peek {
  width: 5px;
  border-left: 1px solid #5a6470;
}
```
